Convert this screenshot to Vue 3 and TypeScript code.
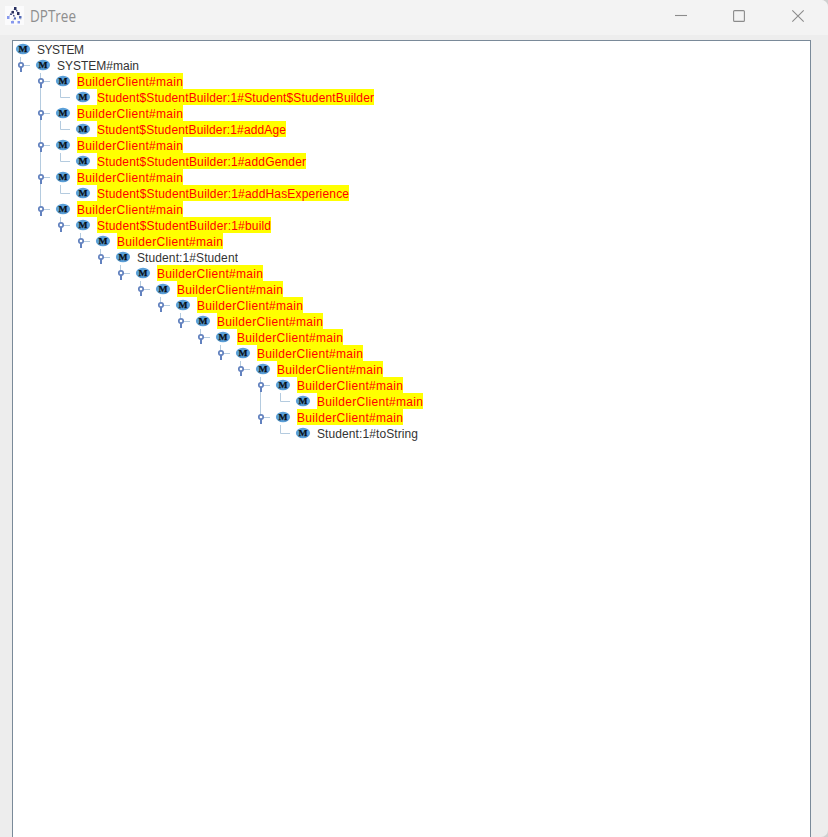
<script setup lang="ts">
type Guide = 'blank' | 'line' | 'open' | 'openMid' | 'leaf'

interface TreeNode {
  label: string
  marked?: boolean
  children?: TreeNode[]
}

interface Row {
  label: string
  marked: boolean
  guides: Guide[]
  width: number
}

const client = (...children: TreeNode[]): TreeNode => ({
  label: 'BuilderClient#main',
  marked: true,
  children,
})
const builder = (method: string, ...children: TreeNode[]): TreeNode => ({
  label: `Student$StudentBuilder:1#${method}`,
  marked: true,
  children,
})

const studentCalls = client(client(client(client(client(client(client(
  client(client()),
  client({ label: 'Student:1#toString' }),
)))))))

const root: TreeNode = {
  label: 'SYSTEM#main',
  children: [
    client(builder('Student$StudentBuilder')),
    client(builder('addAge')),
    client(builder('addGender')),
    client(builder('addHasExperience')),
    client(builder('build', client({
      label: 'Student:1#Student',
      children: [studentCalls],
    }))),
  ],
}

const widths: Record<string, number> = {
  'SYSTEM': 47,
  'SYSTEM#main': 82,
  'BuilderClient#main': 106,
  'Student$StudentBuilder:1#Student$StudentBuilder': 277,
  'Student$StudentBuilder:1#addAge': 189,
  'Student$StudentBuilder:1#addGender': 209,
  'Student$StudentBuilder:1#addHasExperience': 252,
  'Student$StudentBuilder:1#build': 174,
  'Student:1#Student': 101,
  'Student:1#toString': 101,
}

const rows: Row[] = [{ label: 'SYSTEM', marked: false, guides: [], width: widths.SYSTEM }]

function walk(node: TreeNode, before: Guide[], last: boolean) {
  const own: Guide = !node.children?.length ? 'leaf' : last ? 'open' : 'openMid'
  rows.push({
    label: node.label,
    marked: !!node.marked,
    guides: [...before, own],
    width: widths[node.label],
  })
  const next: Guide[] = [...before, last ? 'blank' : 'line']
  node.children?.forEach((c, i, all) => walk(c, next, i === all.length - 1))
}
walk(root, [], true)
</script>

<template>
  <div class="window">
    <header class="titlebar">
      <svg class="logo" width="19" height="19" viewBox="0 0 19 19">
        <rect width="19" height="19" fill="#fbfbfc" />
        <path d="M9 3 6 7 3 12M10 3l3 4 3 7M7 7l3 4-3 5" fill="none" stroke="#c9ccd8" stroke-width=".8" />
        <path d="M9 1h2.5v3H9zM6.500 5h2.500v2.500H6.500zM12 6h2.500v3H12z" fill="#28305f" />
        <path d="M5 7.500h2v1.500H5zM8 9h1.500v1.500H8zM11 4h1.500v1.500H11z" fill="#4c5688" />
        <path d="M2 10h2.500v3H2zM6 15h3v2.500H6zM12.500 15h2.500v2.500h-2.500z" fill="#8698ee" />
        <path d="M9 11.500h2v2H9zM14 10h2.500v2.500H14z" fill="#536bb8" />
      </svg>
      <svg class="title" width="60" height="22"><text x="0" y="16" textLength="46" lengthAdjust="spacingAndGlyphs">DPTree</text></svg>
      <div class="controls">
        <svg width="12" height="12" viewBox="0 0 12 12"><path d="M1 5.500h12" /></svg>
        <svg width="12" height="12" viewBox="0 0 12 12"><rect x=".6" y=".6" width="10.8" height="10.8" rx="1" /></svg>
        <svg width="12" height="12" viewBox="0 0 12 12"><path d="m.3.3 11.4 11.4M11.7.3.3 11.7" /></svg>
      </div>
    </header>
    <main class="content">
      <div class="tree">
        <div v-for="(row, i) in rows" :key="i" class="row">
          <svg v-for="(g, k) in row.guides" :key="k" class="guide" width="20" height="16" viewBox="0 0 20 16">
            <path v-if="g === 'line' || g === 'openMid'" class="rule" d="M7.5 0v16" />
            <path v-if="g === 'open'" class="rule" d="M7.5 0v8" />
            <path v-if="g === 'leaf'" class="rule" d="M7.5 0v8.5h9.5" />
            <template v-if="g === 'open' || g === 'openMid'">
              <path class="rule" d="M11 8.5h6" />
              <path class="stem" d="M8 10v5" />
              <circle class="knob" cx="8" cy="8" r="2.2" />
            </template>
          </svg>
          <svg class="icon" width="20" height="16" viewBox="0 0 20 16">
            <ellipse cx="10" cy="8" rx="7.1" ry="5.3" fill="#5a9fd8" />
            <text x="10" y="11" text-anchor="middle" textLength="9" lengthAdjust="spacingAndGlyphs">M</text>
          </svg>
          <span class="label" :class="{ marked: row.marked }">
            <svg :width="row.width" height="16"><text x="0" y="13" :textLength="row.width">{{ row.label }}</text></svg>
          </span>
        </div>
      </div>
    </main>
  </div>
</template>

<style>
body {
  margin: 0;
  background: #d0d0d0;
}
</style>

<style scoped>
.window {
  display: flex;
  flex-direction: column;
  height: 837px;
  overflow: hidden;
  background: #ededed;
  border-radius: 0 7px 7px 0;
}
.titlebar {
  display: flex;
  align-items: center;
  flex: 0 0 35px;
  box-sizing: border-box;
  padding: 0 24px 3px 5px;
  background: #f3f3f3;
}
.logo {
  display: block;
  margin-top: -1px;
}
.title {
  display: block;
  margin: 2px 0 0 6px;
  font: 15.5px "Open Sans", "Noto Sans", sans-serif;
}
.title text {
  fill: #8e8e8e;
}
.controls {
  display: flex;
  gap: 47px;
  margin-left: auto;
}
.controls svg {
  overflow: visible;
  fill: none;
  stroke: #8b8b8b;
  stroke-width: 1.1;
}
.content {
  display: flex;
  flex: 1;
  padding: 5px 17px 0 12px;
}
.tree {
  flex: 1;
  border: 1px solid #7a8a99;
  border-bottom: 0;
  background: #fff;
}
.row {
  display: flex;
  height: 16px;
}
.row svg {
  display: block;
  flex: none;
}
.rule {
  fill: none;
  stroke: #b4cbdf;
  stroke-width: 1;
}
.stem {
  stroke: #6382bf;
  stroke-width: 2;
}
.knob {
  fill: #fff;
  stroke: #6382bf;
  stroke-width: 1.7;
}
.icon text {
  font: bold 9px "Liberation Serif", serif;
  fill: #081018;
  stroke: #081018;
  stroke-width: .25;
}
.label {
  margin-left: 4px;
  font: 12px "Liberation Sans", Arial, sans-serif;
}
.label text {
  fill: #333;
}
.label.marked {
  background: #ff0;
}
.label.marked text {
  fill: #f00;
}
</style>
